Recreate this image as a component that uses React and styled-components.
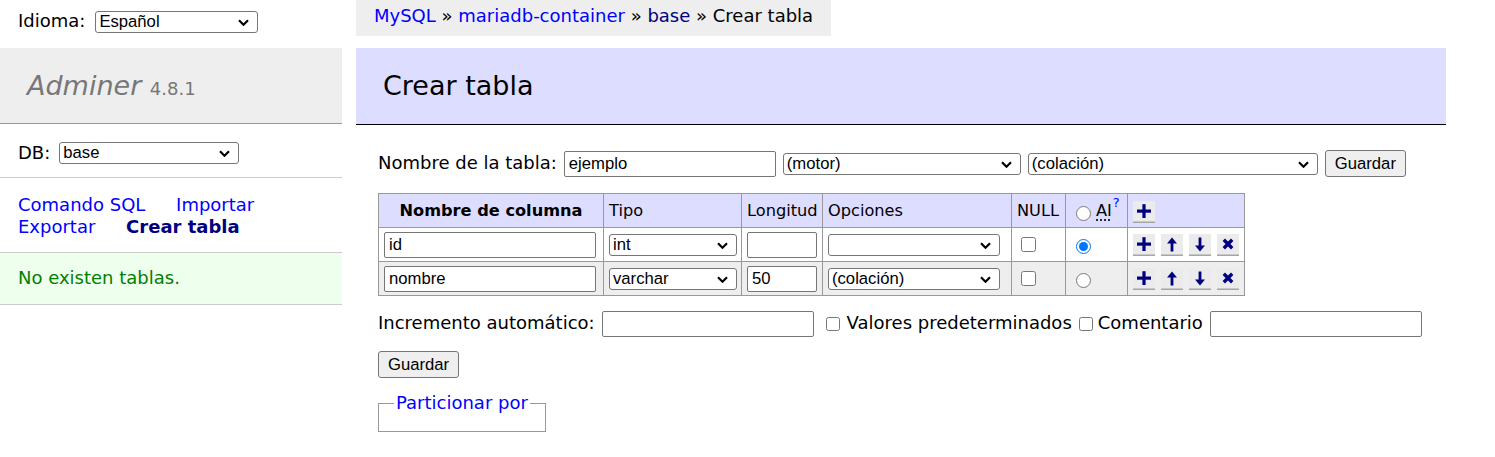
import React from "react";
import styled, { createGlobalStyle } from "styled-components";

const GlobalStyle = createGlobalStyle`
  html, body {
    margin: 0;
    padding: 0;
    background: #fff;
  }
  body {
    color: #000;
    font: 18px/1.25 "DejaVu Sans", Verdana, sans-serif;
  }
`;

const Page = styled.div`
  display: flex;
  align-items: flex-start;
  width: 1495px;
`;

/* ---------- sidebar ---------- */

const Sidebar = styled.div`
  width: 342px;
  flex: none;
`;

const Lang = styled.div`
  display: flex;
  align-items: center;
  gap: 10px;
  height: 43px;
  padding: 0 18px;
`;

const Menu = styled.div`
  margin-top: 5px;
`;

const Logo = styled.h1`
  margin: 0;
  padding: 21px 27px 20px;
  font-size: 27px;
  line-height: 34px;
  height: 34px;
  font-weight: normal;
  color: #777;
  background: #eee;
  border-bottom: 1px solid #999;
`;

const LogoName = styled.span`
  font-style: italic;
`;

const Version = styled.span`
  font-size: 18px;
  line-height: 1;
`;

const MenuBlock = styled.div`
  padding: ${(p) => p.$pad || "14.4px 18px"};
  border-bottom: 1px solid #ccc;
  background: ${(p) => p.$bg || "transparent"};
  color: ${(p) => p.$color || "inherit"};
`;

const DbRow = styled.div`
  display: flex;
  align-items: center;
  gap: 9px;
  height: 24px;
`;

const Link = styled.a`
  color: ${(p) => (p.$visited ? "navy" : "blue")};
  font-weight: ${(p) => (p.$active ? "bold" : "normal")};
  text-decoration: none;
  white-space: nowrap;
  margin-right: ${(p) => (p.$spaced ? "25px" : "0")};
  cursor: pointer;
`;

/* ---------- main ---------- */

const Main = styled.div`
  margin-left: 14px;
  width: 1090px;
  flex: none;
`;

const Breadcrumb = styled.div`
  width: fit-content;
  height: 36px;
  line-height: 32px;
  padding: 0 18px;
  background: #eee;
  white-space: nowrap;
`;

const Title = styled.h2`
  margin: 12px 0 25px;
  padding: 21px 27px;
  font-size: 27px;
  line-height: 34px;
  font-weight: normal;
  color: #000;
  background: #ddf;
  border-bottom: 1px solid #000;
`;

const Form = styled.form`
  margin: 0;
  padding-left: 22px;
`;

const Row = styled.div`
  display: flex;
  align-items: center;
  gap: ${(p) => p.$gap ?? 7}px;
  height: 27px;
  margin-top: ${(p) => p.$top ?? 0}px;
  white-space: nowrap;
`;

const controlFont = `font: 16.67px/1.2 "Liberation Sans", Arial, sans-serif;`;

const TextInput = styled.input`
  box-sizing: border-box;
  width: ${(p) => p.$w}px;
  height: 26px;
  padding: 1px 4px;
  border: 1px solid #767676;
  border-radius: 2px;
  background: #fff;
  color: #000;
  ${controlFont}
  flex: none;
  margin: 0;
`;

const SelectWrap = styled.span`
  position: relative;
  display: inline-flex;
  width: ${(p) => p.$w}px;
  flex: none;
  vertical-align: middle;
`;

const NativeSelect = styled.select`
  box-sizing: border-box;
  width: 100%;
  height: 22px;
  margin: 0;
  padding: 0 26px 0 3px;
  appearance: none;
  -webkit-appearance: none;
  border: 1px solid #767676;
  border-radius: 3px;
  background: #fff;
  color: #000;
  ${controlFont}
`;

const Chevron = styled.svg`
  position: absolute;
  right: 9px;
  top: 8px;
  pointer-events: none;
`;

const Button = styled.button`
  box-sizing: border-box;
  height: 27px;
  padding: 0 9px;
  margin: 0;
  border: 1px solid #767676;
  border-radius: 3px;
  background: #efefef;
  color: #000;
  ${controlFont}
  flex: none;
`;

const Check = styled.input`
  width: ${(p) => p.$size || 14}px;
  height: ${(p) => p.$size || 14}px;
  margin: ${(p) => p.$margin || "0"};
  vertical-align: middle;
  flex: none;
`;

const Table = styled.table`
  margin-top: 16px;
  border-collapse: collapse;
  table-layout: fixed;
  width: 867px;
  font-size: 16.2px;
`;

const HeadCell = styled.td`
  border: 1px solid #999;
  padding: 4px 5px 2px;
  background: #ddf;
  font-weight: ${(p) => (p.$bold ? "bold" : "normal")};
  text-align: ${(p) => (p.$center ? "center" : "left")};
  white-space: nowrap;
`;

const BodyRow = styled.tr`
  height: 34px;
  background: ${(p) => (p.$odd ? "#eee" : "#fff")};
`;

const HeadRow = styled.tr`
  height: 34px;
`;

const Cell = styled.td`
  border: 1px solid #999;
  padding: 3px 5px;
  white-space: nowrap;
  vertical-align: middle;
  line-height: 0;
`;

const CellLine = styled.div`
  display: flex;
  align-items: center;
  gap: ${(p) => p.$gap ?? 0}px;
  line-height: 1.25;
`;

const Abbr = styled.abbr`
  margin-left: 3px;
  text-decoration: underline dotted;
  text-underline-offset: 3px;
  cursor: help;
`;

const Help = styled.sup`
  color: blue;
  font-size: 13px;
  line-height: 0;
  margin-left: 1px;
  align-self: flex-start;
  margin-top: 2px;
`;

const IconButton = styled.button`
  display: inline-flex;
  width: 22px;
  height: 22px;
  padding: 0;
  margin: 0;
  border: 0;
  background: none;
  flex: none;
`;

const Fieldset = styled.fieldset`
  display: inline-block;
  margin: 14px 0 0;
  padding: 0 15px 17px;
  border: 1px solid #999;
  min-width: 0;
`;

const Legend = styled.legend`
  padding: 0 2px;
  line-height: 22px;
`;

/* ---------- pieces ---------- */

function Select({ w, value }) {
  return (
    <SelectWrap $w={w}>
      <NativeSelect defaultValue={value}>
        <option value={value}>{value}</option>
      </NativeSelect>
      <Chevron width="11" height="7" viewBox="0 0 11 7">
        <path d="M1 1.2l4.5 4.5 4.5-4.5" fill="none" stroke="#000" strokeWidth="2.2" />
      </Chevron>
    </SelectWrap>
  );
}

const glyphs = {
  add: (
    <>
      <rect x="4" y="8.5" width="14" height="3.2" />
      <rect x="9.4" y="3.2" width="3.2" height="13.8" />
    </>
  ),
  up: (
    <>
      <polygon points="11,3.5 16,9.5 6,9.5" />
      <rect x="9.6" y="8" width="2.8" height="9.5" />
    </>
  ),
  down: (
    <>
      <rect x="9.6" y="3.5" width="2.8" height="9.5" />
      <polygon points="6,11.5 16,11.5 11,17.5" />
    </>
  ),
  drop: (
    <path
      d="M6.8 5.8l8.4 8.4M15.2 5.8l-8.4 8.4"
      stroke="#000080"
      strokeWidth="3.4"
      strokeLinecap="butt"
    />
  ),
};

function Icon({ kind }) {
  return (
    <IconButton type="button">
      <svg width="22" height="22" viewBox="0 0 22 22">
        <rect x="0" y="0" width="22" height="21" fill="#ebebeb" />
        <rect x="0" y="20.5" width="22" height="1.5" fill="#a6a6a6" />
        <g fill="#000080">{glyphs[kind]}</g>
      </svg>
    </IconButton>
  );
}

const columns = [
  { name: "id", type: "int", length: "", options: "" },
  { name: "nombre", type: "varchar", length: "50", options: "(colación)" },
];

export default function App() {
  return (
    <>
      <GlobalStyle />
      <Page>
        <Sidebar>
          <Lang>
            Idioma:
            <Select w={163} value="Español" />
          </Lang>
          <Menu>
            <Logo>
              <LogoName>Adminer</LogoName> <Version>4.8.1</Version>
            </Logo>
            <MenuBlock $pad="17px 18px 12px">
              <DbRow>
                DB:
                <Select w={180} value="base" />
              </DbRow>
            </MenuBlock>
            <MenuBlock $pad="15.5px 18px 13.5px">
              <Link $spaced>Comando SQL</Link> <Link $spaced>Importar</Link>{" "}
              <Link $spaced>Exportar</Link>{" "}
              <Link $spaced $visited $active>
                Crear tabla
              </Link>
            </MenuBlock>
            <MenuBlock $bg="#efe" $color="green">
              No existen tablas.
            </MenuBlock>
          </Menu>
        </Sidebar>

        <Main>
          <Breadcrumb>
            <Link>MySQL</Link> » <Link>mariadb-container</Link> »{" "}
            <Link $visited>base</Link> » Crear tabla
          </Breadcrumb>
          <Title>Crear tabla</Title>

          <Form>
            <Row>
              Nombre de la tabla:
              <TextInput $w={212} defaultValue="ejemplo" />
              <Select w={238} value="(motor)" />
              <Select w={290} value="(colación)" />
              <Button type="button">Guardar</Button>
            </Row>

            <Table>
              <colgroup>
                <col style={{ width: 225 }} />
                <col style={{ width: 138 }} />
                <col style={{ width: 81 }} />
                <col style={{ width: 189 }} />
                <col style={{ width: 54 }} />
                <col style={{ width: 62 }} />
                <col style={{ width: 117 }} />
              </colgroup>
              <thead>
                <HeadRow>
                  <HeadCell as="th" $bold $center>
                    Nombre de columna
                  </HeadCell>
                  <HeadCell>Tipo</HeadCell>
                  <HeadCell>Longitud</HeadCell>
                  <HeadCell>Opciones</HeadCell>
                  <HeadCell>NULL</HeadCell>
                  <HeadCell>
                    <CellLine>
                      <Check type="radio" name="auto_increment" $size={15} $margin="4px 2px 0 5px" />
                      <Abbr title="Incremento automático">AI</Abbr>
                      <Help>?</Help>
                    </CellLine>
                  </HeadCell>
                  <HeadCell>
                    <CellLine>
                      <Icon kind="add" />
                    </CellLine>
                  </HeadCell>
                </HeadRow>
              </thead>
              <tbody>
                {columns.map((c, i) => (
                  <BodyRow key={c.name} $odd={i % 2 === 1}>
                    <Cell>
                      <TextInput $w={212} defaultValue={c.name} />
                    </Cell>
                    <Cell>
                      <Select w={128} value={c.type} />
                    </Cell>
                    <Cell>
                      <TextInput $w={70} defaultValue={c.length} />
                    </Cell>
                    <Cell>
                      <Select w={172} value={c.options} />
                    </Cell>
                    <Cell>
                      <Check type="checkbox" $size={15} $margin="0 0 0 4px" />
                    </Cell>
                    <Cell>
                      <Check
                        type="radio"
                        name={`ai-${i}`}
                        defaultChecked={i === 0}
                        $size={15}
                        $margin="3px 0 0 5px"
                      />
                    </Cell>
                    <Cell>
                      <CellLine $gap={6}>
                        <Icon kind="add" />
                        <Icon kind="up" />
                        <Icon kind="down" />
                        <Icon kind="drop" />
                      </CellLine>
                    </Cell>
                  </BodyRow>
                ))}
              </tbody>
            </Table>

            <Row $top={14}>
              Incremento automático:
              <TextInput $w={212} />
              <Check type="checkbox" $margin="0 0 0 5px" />
              Valores predeterminados
              <Check type="checkbox" $margin="0 -2px 0 0" />
              Comentario
              <TextInput $w={212} />
            </Row>

            <Row $top={14}>
              <Button type="button">Guardar</Button>
            </Row>

            <Fieldset>
              <Legend>
                <Link>Particionar por</Link>
              </Legend>
            </Fieldset>
          </Form>
        </Main>
      </Page>
    </>
  );
}
